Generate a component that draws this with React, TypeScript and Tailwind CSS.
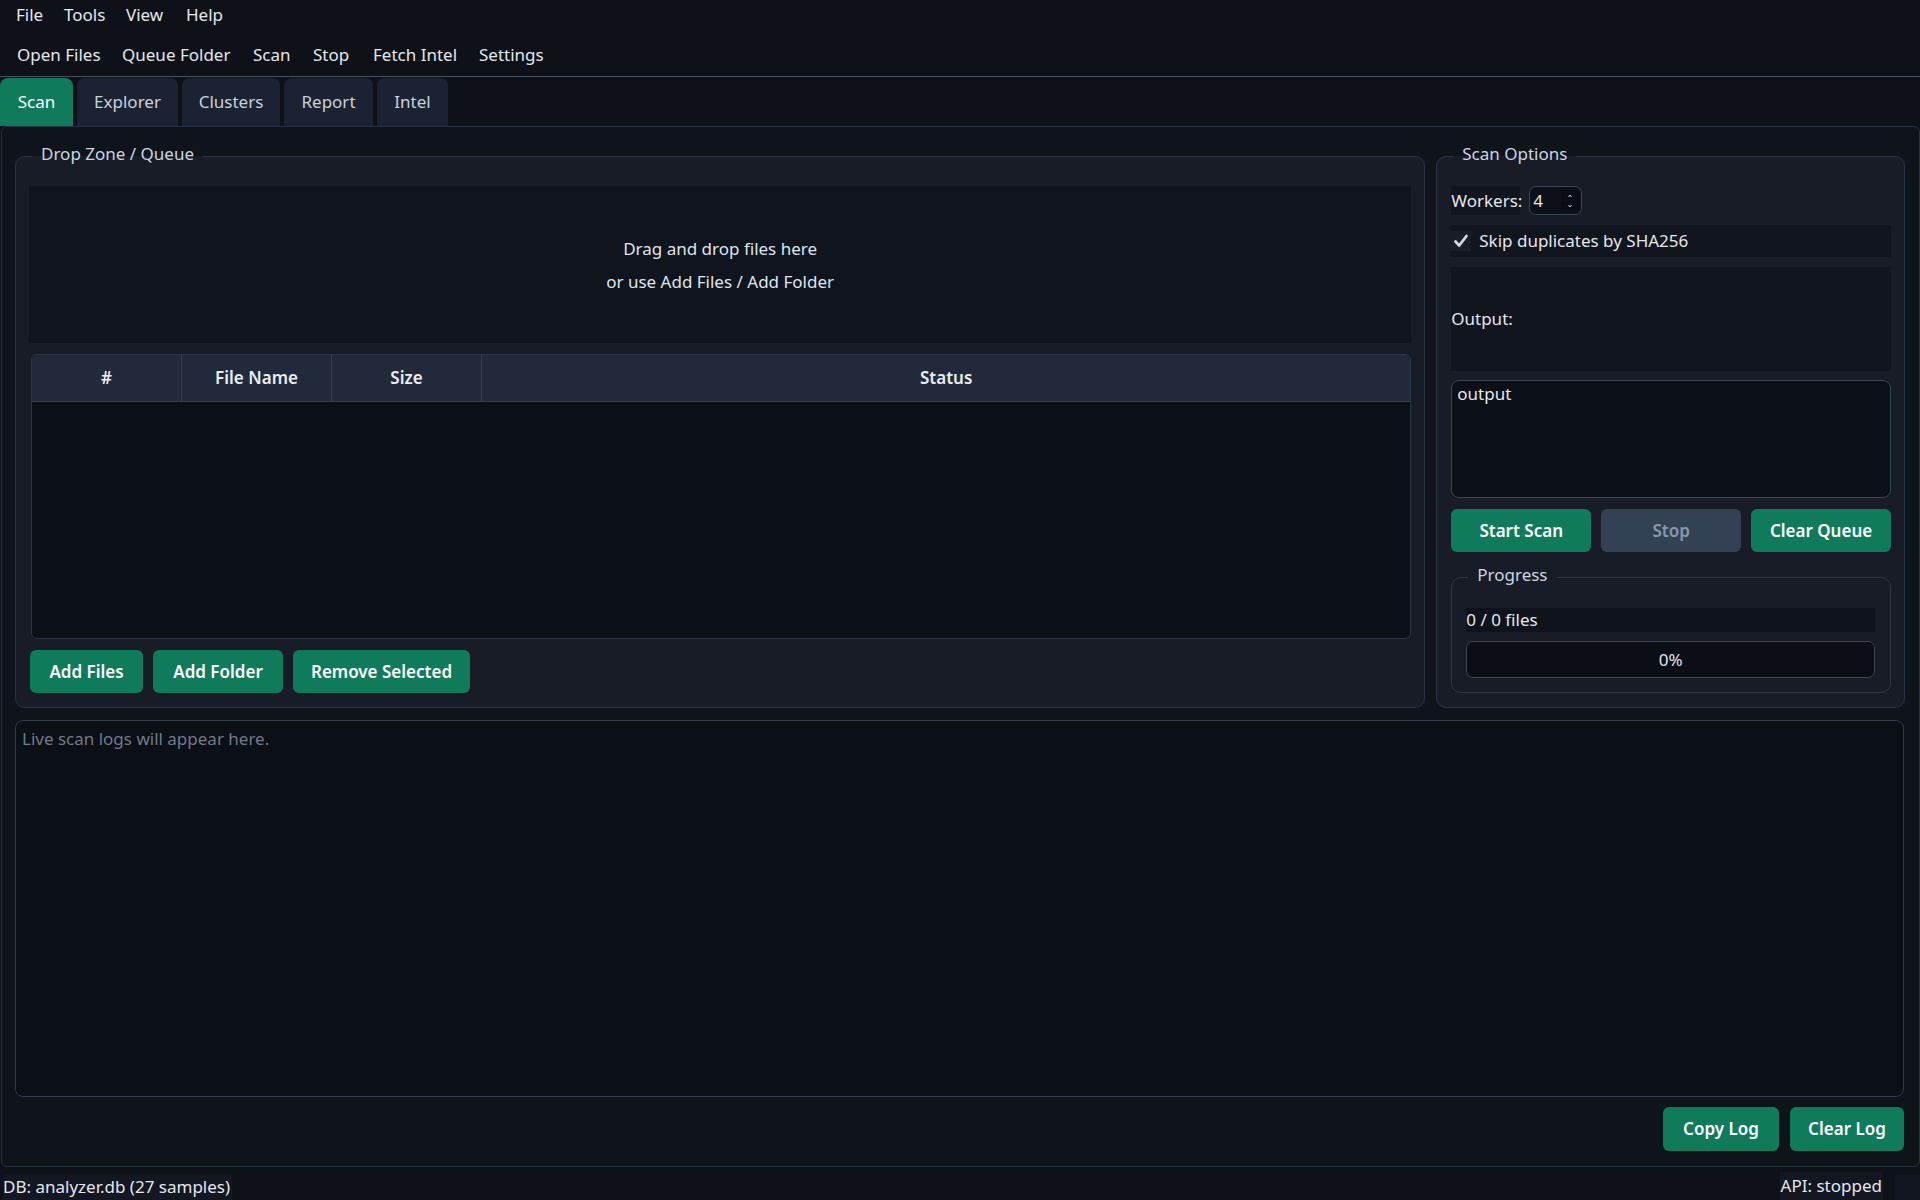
import React from "react";

const menus: [string, string][] = [
  ["File", "w-[48px]"],
  ["Tools", "w-[62px]"],
  ["View", "w-[60px]"],
  ["Help", "w-[60px]"],
];

const actions: [string, string][] = [
  ["Open Files", "w-[105px]"],
  ["Queue Folder", "w-[131px]"],
  ["Scan", "w-[60px]"],
  ["Stop", "w-[60px]"],
  ["Fetch Intel", "w-[106px]"],
  ["Settings", "w-[90px]"],
];

const tabs: [string, string][] = [
  ["Scan", "w-[73px]"],
  ["Explorer", "w-[101px]"],
  ["Clusters", "w-[98px]"],
  ["Report", "w-[89px]"],
  ["Intel", "w-[71px]"],
];

function GreenButton({ label, className = "" }: { label: string; className?: string }) {
  return (
    <button
      type="button"
      className={`h-[43px] rounded-[6px] bg-[#0f7b5b] text-white text-[17px] font-semibold flex items-center justify-center shrink-0 ${className}`}
    >
      {label}
    </button>
  );
}

function GroupBox({
  title,
  className = "",
  children,
}: {
  title: string;
  className?: string;
  children: React.ReactNode;
}) {
  return (
    <fieldset
      className={`min-w-0 border border-[#293344] rounded-[10px] bg-[#171c27] flex flex-col ${className}`}
    >
      <legend className="ml-[16px] px-[9px] h-[28px] leading-[24px] pb-[4px] text-[#cbd5e1]">
        {title}
      </legend>
      {children}
    </fieldset>
  );
}

export default function App() {
  return (
    <div className="w-[1920px] h-[1200px] bg-[#0e1218] text-[#e5e7eb] text-[17px] font-['Noto_Sans','DejaVu_Sans',sans-serif] flex flex-col overflow-hidden">
      {/* menu bar */}
      <div className="h-[30px] shrink-0 flex items-center pl-[16px]">
        {menus.map(([t, w]) => (
          <div key={t} className={w}>
            {t}
          </div>
        ))}
      </div>

      {/* tool bar */}
      <div className="h-[47px] shrink-0 flex items-center pl-[17px] pt-[4px] border-b border-[#4a515e]">
        {actions.map(([t, w]) => (
          <div key={t} className={w}>
            {t}
          </div>
        ))}
      </div>

      {/* tab bar */}
      <div className="h-[49px] shrink-0 flex items-end gap-[4px]">
        {tabs.map(([t, w], i) => (
          <div
            key={t}
            className={`${w} h-[48px] rounded-t-[8px] flex items-center justify-center ${
              i === 0 ? "bg-[#0f7b5b] text-white" : "bg-[#1b2231] text-[#c9d1dd]"
            }`}
          >
            {t}
          </div>
        ))}
      </div>

      {/* tab pane */}
      <div className="flex-1 min-h-0 ml-[1px] border border-[#243044] rounded-[6px] bg-[#0f131a] pl-[13px] pr-[14px] pt-[15px] pb-[15px] flex flex-col">
        <div className="h-[566px] shrink-0 flex gap-[11px]">
          {/* queue */}
          <GroupBox title="Drop Zone / Queue" className="w-[1411px]">
            <div className="flex-1 min-h-0 flex flex-col px-[13px] pt-[16px] pb-[14px]">
              <div className="h-[157px] shrink-0 bg-[#10141c] flex flex-col items-center justify-center leading-[33px] text-[#dfe6ef]">
                <div>Drag and drop files here</div>
                <div>or use Add Files / Add Folder</div>
              </div>
              <div className="mt-[11px] ml-[2px] flex-1 min-h-0 border border-[#2c3648] rounded-[6px] bg-[#0b0f16] flex flex-col overflow-hidden">
                <div className="h-[47px] shrink-0 bg-[#212a3a] border-b border-[#344055] flex font-semibold text-[#e8edf4]">
                  <div className="w-[150px] border-r border-[#334052] flex items-center justify-center">#</div>
                  <div className="w-[150px] border-r border-[#334052] flex items-center justify-center">File Name</div>
                  <div className="w-[150px] border-r border-[#334052] flex items-center justify-center">Size</div>
                  <div className="flex-1 flex items-center justify-center">Status</div>
                </div>
              </div>
              <div className="mt-[11px] ml-[1px] flex gap-[10px]">
                <GreenButton label="Add Files" className="w-[113px]" />
                <GreenButton label="Add Folder" className="w-[130px]" />
                <GreenButton label="Remove Selected" className="w-[177px]" />
              </div>
            </div>
          </GroupBox>

          {/* scan options */}
          <GroupBox title="Scan Options" className="w-[469px]">
            <div className="flex-1 min-h-0 flex flex-col pl-[14px] pr-[13px] pt-[16px] pb-[14px]">
              <div className="h-[29px] shrink-0 flex items-center gap-[9px]">
                <div className="h-[29px] w-[69px] bg-[#11151e] flex items-center">Workers:</div>
                <div className="h-[29px] w-[53px] border border-[#3a4557] rounded-[7px] bg-[#0d1117] flex items-center pl-[3px] pr-[2px] justify-between">
                  <span>4</span>
                  <div className="flex flex-col gap-[1px]">
                    <div className="w-[18px] h-[9px] bg-[#090c11] flex items-center justify-center">
                      <svg width="4" height="4" viewBox="0 0 4 4">
                        <path d="M0.5 3 L2 1 L3.5 3" stroke="#cbd5e1" strokeWidth="1" fill="none" />
                      </svg>
                    </div>
                    <div className="w-[18px] h-[9px] bg-[#090c11] flex items-center justify-center">
                      <svg width="4" height="4" viewBox="0 0 4 4">
                        <path d="M0.5 1 L2 3 L3.5 1" stroke="#cbd5e1" strokeWidth="1" fill="none" />
                      </svg>
                    </div>
                  </div>
                </div>
              </div>

              <div className="mt-[10px] h-[32px] shrink-0 bg-[#11151e] flex items-center">
                <div className="w-[20px] h-[20px] bg-[#181d27] flex items-center justify-center">
                  <svg width="16" height="16" viewBox="0 0 16 16">
                    <path
                      d="M2.5 8.5 L6.2 12.5 L13.5 3"
                      stroke="#d1d8e2"
                      strokeWidth="2.8"
                      fill="none"
                      strokeLinecap="round"
                      strokeLinejoin="round"
                    />
                  </svg>
                </div>
                <span className="ml-[8px]">Skip duplicates by SHA256</span>
              </div>

              <div className="mt-[10px] h-[104px] shrink-0 bg-[#11151e] flex items-center">Output:</div>

              <div className="mt-[9px] h-[118px] shrink-0 border border-[#3a4557] rounded-[8px] bg-[#0b0f16] px-[5px] pt-[1px] leading-[24px]">
                output
              </div>

              <div className="mt-[11px] flex gap-[10px]">
                <GreenButton label="Start Scan" className="flex-1" />
                <button
                  type="button"
                  className="flex-1 h-[43px] rounded-[6px] bg-[#334155] text-[#8a97ab] text-[17px] font-semibold flex items-center justify-center"
                >
                  Stop
                </button>
                <GreenButton label="Clear Queue" className="flex-1" />
              </div>

              <fieldset className="mt-[11px] min-w-0 border border-[#2e3849] rounded-[10px] flex flex-col">
                <legend className="ml-[16px] px-[9px] h-[28px] leading-[24px] pb-[4px] text-[#cbd5e1]">
                  Progress
                </legend>
                <div className="flex flex-col pl-[14px] pr-[15px] pt-[17px] pb-[14px]">
                  <div className="h-[24px] bg-[#0f131b] flex items-center">0 / 0 files</div>
                  <div className="mt-[9px] h-[37px] border border-[#3a4557] rounded-[7px] bg-[#0b0e15] flex items-center justify-center">
                    0%
                  </div>
                </div>
              </fieldset>
            </div>
          </GroupBox>
        </div>

        {/* live log */}
        <div className="mt-[12px] h-[377px] shrink-0 mr-[1px] border border-[#2f3a4b] rounded-[8px] bg-[#0b0f16] px-[6px] pt-[5px] text-[#727a87]">
          Live scan logs will appear here.
        </div>

        <div className="mt-[10px] flex justify-end gap-[11px] mr-[1px]">
          <GreenButton label="Copy Log" className="w-[116px] h-[44px]" />
          <GreenButton label="Clear Log" className="w-[114px] h-[44px]" />
        </div>
      </div>

      {/* status bar */}
      <div className="h-[33px] shrink-0 flex items-end justify-between">
        <div className="ml-[3px] h-[26px] bg-[#121722] flex items-center pr-[2px] whitespace-nowrap">
          DB: analyzer.db (27 samples)
        </div>
        <div className="flex items-end">
          <div className="h-[28px] bg-[#121722] flex items-center px-[1px] whitespace-nowrap">API: stopped</div>
          <div className="ml-[12px] w-[25px] h-[25px] bg-[#121620]" />
        </div>
      </div>
    </div>
  );
}
